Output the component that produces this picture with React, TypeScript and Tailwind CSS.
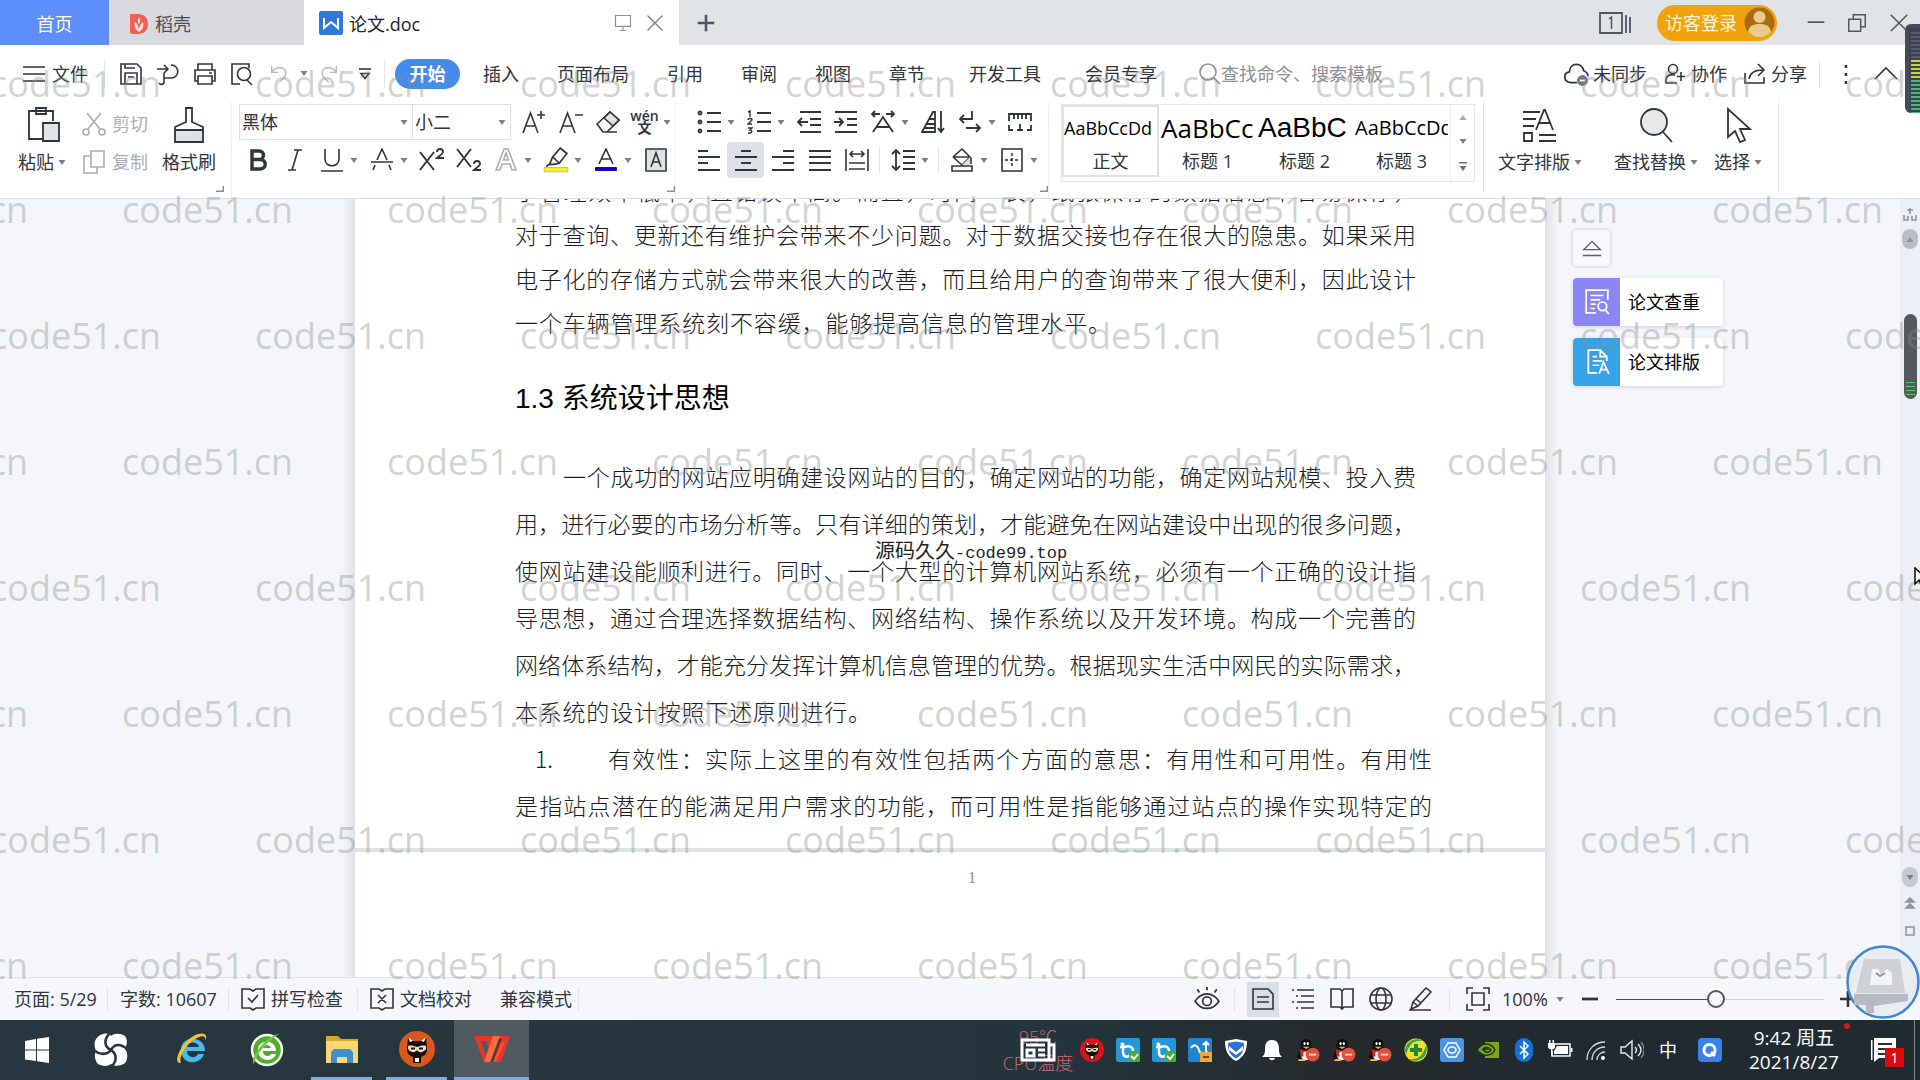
import type { ReactNode } from "react";

const SANS = "font-['Open_Sans','Noto_Sans_CJK_SC',sans-serif]";

interface IconProps {
  children: ReactNode;
  size?: number;
  box?: string;
  stroke?: number;
  className?: string;
}

const Icon = ({ children, size = 24, box = "0 0 24 24", stroke = 1.6, className }: IconProps) => (
  <svg
    width={size}
    height={size}
    viewBox={box}
    fill="none"
    stroke="currentColor"
    strokeWidth={stroke}
    className={`shrink-0 ${className ?? ""}`}
    aria-hidden="true"
  >
    {children}
  </svg>
);

const Caret = ({ className = "text-[#7b7f85]" }: { className?: string }) => (
  <svg width="8" height="5" viewBox="0 0 8 5" className={`shrink-0 ${className}`} aria-hidden="true">
    <path d="M0.5 0h7L4 5z" fill="currentColor" />
  </svg>
);

const Tool = ({ label, drop, active, children }: { label: string; drop?: boolean; active?: boolean; children: ReactNode }) => (
  <button type="button" aria-label={label} className="flex h-9 items-center shrink-0">
    <span className={`flex h-9 w-[37px] items-center justify-center ${active ? "bg-[#dde1e6] rounded-sm" : ""}`}>
      {children}
    </span>
    {drop && (
      <span className="flex w-[13px] justify-start">
        <Caret />
      </span>
    )}
  </button>
);

const Sep = ({ className = "h-8" }: { className?: string }) => (
  <span className={`w-px shrink-0 bg-[#e3e5e8] ${className}`} />
);

const Corner = ({ className = "" }: { className?: string }) => (
  <svg width="8" height="6" viewBox="0 0 8 6" className={`self-end shrink-0 ${className}`} aria-hidden="true">
    <path d="M0 5.3h7.3V0" fill="none" stroke="#8a8e94" strokeWidth="1.4" />
  </svg>
);

const TitleBar = () => (
  <header className="flex h-[45px] shrink-0 bg-[#e1e4e6] text-lg">
    <button type="button" className="w-[109px] shrink-0 bg-[#5d8efa] pt-0.5 text-white">
      首页
    </button>
    <button type="button" className="flex w-[195px] shrink-0 items-center gap-1.5 bg-[#d9dade] pl-5 pt-0.5 text-[#4a4e58]">
      <svg width="20" height="24" viewBox="0 0 20 24" aria-hidden="true">
        <path d="M1 2h8c6 0 10 4 10 10s-4 10-10 10H4c-2 0-3-1-3-3z" fill="#ef5f55" />
        <path d="M10 20c-4-2-5-7-4-10 3 2 4 6 4 10zM10 20c4-2 5-7 4-10-3 2-4 6-4 10zM10 12c-2-2-1-5 0-7 1 2 2 5 0 7z" fill="#fbe3df" />
      </svg>
      稻壳
    </button>
    <div className="flex w-[375px] shrink-0 items-center bg-white pl-[15px] pr-3.5 text-[#1d2026]">
      <svg width="24" height="24" viewBox="0 0 24 24" aria-hidden="true">
        <rect width="24" height="24" rx="2" fill="#2f78dc" />
        <path d="M5 7v10l7-6 7 6V7" fill="none" stroke="#fff" strokeWidth="2" />
      </svg>
      <span className="ml-1.5 grow pt-0.5">论文.doc</span>
      <Icon size={20} className="text-[#8d9198]" stroke={1.4}>
        <path d="M3 3h18v13H3zM12 16v5M8 21h8" />
      </Icon>
      <button type="button" aria-label="关闭标签" className="ml-3">
        <Icon size={20} className="text-[#7b7f85]">
          <path d="M3 3l18 18M21 3L3 21" />
        </Icon>
      </button>
    </div>
    <button type="button" aria-label="新建标签" className="ml-4">
      <Icon size={22} stroke={2.8} className="text-[#4b5563]">
        <path d="M12 3v18M3 12h18" />
      </Icon>
    </button>
    <div className="ml-auto flex items-center text-[#4f5563]">
      <Icon size={34} box="0 0 34 24" stroke={1.8}>
        <path d="M2 2h22v20H2zM28 4v18M32 6v16" />
        <path d="M11 8l2.500-2v12" strokeWidth="1.5" />
      </Icon>
      <Sep className="ml-3 h-7 bg-[#d5d7da]" />
      <button type="button" className="ml-3 flex h-9 w-[120px] items-center justify-between rounded-full bg-[#f1a30d] pl-2 pr-0.5 text-[#fff6df]">
        访客登录
        <svg width="31" height="31" viewBox="0 0 31 31" aria-hidden="true">
          <circle cx="15.500" cy="15.500" r="15" fill="#a96c12" />
          <circle cx="15.500" cy="10" r="6" fill="#ecca88" />
          <path d="M4 25c1-6 5-8 11.500-8S26 19 27 25c-6 7-17 7-23 0z" fill="#ecca88" />
        </svg>
      </button>
      <Sep className="ml-3 h-7 bg-[#d5d7da]" />
      <button type="button" aria-label="最小化" className="ml-4">
        <Icon size={20}>
          <path d="M2 11h20" strokeWidth="2" />
        </Icon>
      </button>
      <button type="button" aria-label="还原" className="ml-5">
        <Icon size={22}>
          <path d="M3 8h13v13H3zM8 8V3h13v13h-5" />
        </Icon>
      </button>
      <button type="button" aria-label="关闭" className="ml-5 mr-2.5">
        <Icon size={22}>
          <path d="M3 3l18 18M21 3L3 21" />
        </Icon>
      </button>
    </div>
  </header>
);

const MenuBar = () => (
  <nav className="flex h-[57px] shrink-0 items-center text-lg text-[#30343c]">
    <button type="button" className="ml-[22px] flex items-center gap-1.5">
      <Icon>
        <path d="M1 5h22M1 12h22M1 19h22" />
      </Icon>
      文件
    </button>
    <Sep className="ml-4 h-7" />
    <div className="ml-3.5 flex items-center gap-[13px]">
      <button type="button" aria-label="保存">
        <Icon>
          <path d="M2 2h16l4 4v16H2zM6 2v4h10M6 22V11h12v11M9 15h6" />
        </Icon>
      </button>
      <button type="button" aria-label="输出为PDF">
        <Icon>
          <path d="M1 7h11M8 3l4 4-4 4M15 3c9 0 9 13 0 13H8M8 11v9c0 3-4 3-5 1" />
        </Icon>
      </button>
      <button type="button" aria-label="打印">
        <Icon>
          <path d="M5 8V2h14v6M5 19H2V8h20v11h-3M5 14h14v8H5zM16 11h3" />
        </Icon>
      </button>
      <button type="button" aria-label="打印预览">
        <Icon>
          <path d="M10 22H2V2h17v4M17 18l5 5" />
          <circle cx="14" cy="12" r="6.500" />
        </Icon>
      </button>
    </div>
    <div className="ml-4 flex items-center gap-2.5 text-[#b5b9be]">
      <button type="button" aria-label="撤销">
        <Icon size={20}>
          <path d="M2 2v8h8M2 10c5-8 17-7 17 1 0 5-4 7-8 11" />
        </Icon>
      </button>
      <Caret />
      <button type="button" aria-label="恢复">
        <Icon size={20}>
          <path d="M22 2v8h-8M22 10C17 2 5 3 5 11c0 5 4 7 8 11" />
        </Icon>
      </button>
    </div>
    <button type="button" aria-label="自定义快速访问" className="ml-5">
      <Icon size={14} box="0 0 14 14">
        <path d="M1 2h12" />
        <path d="M3 6.500l4 5 4-5z" />
      </Icon>
    </button>
    <Sep className="ml-3 h-7" />
    <button type="button" className="ml-2.5 h-[30px] w-[65px] rounded-full bg-[#478bea] font-bold text-white">
      开始
    </button>
    <div className="ml-[23px] flex gap-[38px]">
      {["插入", "页面布局", "引用", "审阅", "视图", "章节"].map((m) => (
        <button type="button" key={m}>
          {m}
        </button>
      ))}
    </div>
    <div className="ml-11 flex gap-11">
      <button type="button">开发工具</button>
      <button type="button">会员专享</button>
    </div>
    <label className="ml-10 flex items-center text-[#8b909a]">
      <Icon>
        <circle cx="11" cy="10" r="8" />
        <path d="M17 16l6 6" />
      </Icon>
      <input type="text" aria-label="查找命令" placeholder="查找命令、搜索模板" className="w-[170px] bg-transparent outline-none placeholder:text-[#8b909a]" />
    </label>
    <div className="ml-auto flex items-center">
      <button type="button" className="flex items-center gap-1">
        <Icon size={26}>
          <path d="M13 20H7c-7-1-7-9-1-10C6 1 18 1 19 9c3 1 4 3 4 5" />
          <circle cx="18" cy="18" r="5" fill="#6d7793" stroke="none" />
          <path d="M15.500 18h5" stroke="#fff" />
        </Icon>
        未同步
      </button>
      <button type="button" className="ml-4 flex items-center gap-1">
        <Icon>
          <circle cx="10" cy="7" r="4.500" />
          <path d="M14 21H3v-3c0-5 5-6 9-5M18 10v9M14 14.500h8" />
        </Icon>
        协作
      </button>
      <button type="button" className="ml-4 flex items-center gap-1">
        <Icon>
          <path d="M2 11v10h19v-6M6 17C7 10 12 8 20 8M15 2l6 6-6 6" />
        </Icon>
        分享
      </button>
      <Sep className="ml-3 h-7" />
      <button type="button" aria-label="更多" className="ml-3.5">
        <Icon>
          <path d="M12 3v3M12 11v3M12 19v3" strokeWidth="2.5" />
        </Icon>
      </button>
      <button type="button" aria-label="收起功能区" className="ml-4 mr-[22px]">
        <Icon>
          <path d="M1 17L12 6l11 11" />
        </Icon>
      </button>
    </div>
  </nav>
);

const Lines = ({ rows }: { rows: number[][] }) => (
  <path d={rows.map(([x1, x2, y]) => `M${x1} ${y}H${x2}`).join("")} />
);

const FontGroup = () => (
  <div className="flex w-[436px] shrink-0 flex-col gap-0.5">
    <div className="flex items-center">
      <div className="mr-1 flex h-9 w-[272px] shrink-0 items-center border border-[#dcdfe3]">
        <select aria-label="字体" className="w-[160px] shrink-0 appearance-none bg-transparent pl-0.5 outline-none">
          <option>黑体</option>
        </select>
        <Caret />
        <Sep className="ml-1 h-full" />
        <select aria-label="字号" className="w-[85px] shrink-0 appearance-none bg-transparent pl-0.5 outline-none">
          <option>小二</option>
        </select>
        <Caret />
      </div>
      <Tool label="增大字号">
        <Icon>
          <path d="M1 23L8.500 3 16 23M4 16h9M19 1v8M15 5h8" />
        </Icon>
      </Tool>
      <Tool label="减小字号">
        <Icon>
          <path d="M1 23L8.500 3 16 23M4 16h9M16 5h8" />
        </Icon>
      </Tool>
      <Tool label="清除格式">
        <Icon>
          <path d="M1 14L14 2l9 8-12 12H7zM8 22h13" />
          <path d="M8 8l9 8 6-6-9-8z" fill="#e1e3e6" />
        </Icon>
      </Tool>
      <Tool label="拼音指南" drop>
        <span className="flex flex-col items-center text-sm font-semibold leading-[12px]">
          <span>wén</span>
          <span>文</span>
        </span>
      </Tool>
    </div>
    <div className="flex">
      <Tool label="加粗">
        <Icon stroke={3.4}>
          <path d="M6 3h7c6 0 6 8.500 0 8.500H6zM6 11.500h8c7 0 7 9.500 0 9.500H6z" />
        </Icon>
      </Tool>
      <Tool label="倾斜">
        <Icon>
          <path d="M11 2h8M5 22h8M15 2L9 22" />
        </Icon>
      </Tool>
      <Tool label="下划线" drop>
        <Icon>
          <path d="M5 1v10c0 9 14 9 14 0V1M1 23h22" />
        </Icon>
      </Tool>
      <Tool label="删除线" drop>
        <Icon>
          <path d="M7 12l5-11 5 11M1 14h22M5 17l-2 5M19 17l2 5" />
        </Icon>
      </Tool>
      <Tool label="上标">
        <Icon size={26} box="0 0 26 24" stroke={1.9}>
          <path d="M1 4l14 18M15 4L1 22" />
          <path d="M18 4c0-4 6-4 6 0 0 2-4 4-6 6h7" />
        </Icon>
      </Tool>
      <Tool label="下标">
        <Icon size={26} box="0 0 26 24" stroke={1.9}>
          <path d="M1 1l14 18M15 1L1 19" />
          <path d="M18 16c0-4 6-4 6 0 0 2-4 4-6 6h7" />
        </Icon>
      </Tool>
      <Tool label="文字效果" drop>
        <Icon className="text-[#a9adb2]">
          <path d="M2 22L10 1h4l8 21h-4l-2-6H8l-2 6zM9.500 12h5L12 5z" />
        </Icon>
      </Tool>
      <Tool label="突出显示" drop>
        <Icon size={26}>
          <path d="M9 9l7-8 6 5-7 9zM9 9l-3 7h4l5-1M6 16l-3 2" />
          <rect x="1" y="19" width="22" height="4" fill="#f5ee2b" stroke="#b5b02c" strokeWidth="0.6" />
        </Icon>
      </Tool>
      <Tool label="字体颜色" drop>
        <Icon>
          <path d="M5 16l7-15 7 15M7.500 11h9" />
          <rect x="1" y="19" width="22" height="4" rx="1" fill="#1505c4" stroke="none" />
        </Icon>
      </Tool>
      <Tool label="字符底纹">
        <Icon>
          <path d="M2 1h20v22H2z" fill="#e1e4e7" />
          <path d="M7 19l5-14 5 14M9 14h6" />
        </Icon>
      </Tool>
    </div>
  </div>
);

const ParagraphGroup = () => (
  <div className="flex w-[358px] shrink-0 flex-col gap-0.5">
    <div className="flex">
      <Tool label="项目符号" drop>
        <Icon stroke={1.8}>
          <circle cx="3" cy="3" r="1.500" />
          <circle cx="3" cy="12" r="1.500" />
          <circle cx="3" cy="21" r="1.500" />
          <Lines rows={[[10, 24, 3], [10, 24, 12], [10, 24, 21]]} />
        </Icon>
      </Tool>
      <Tool label="编号" drop>
        <Icon stroke={1.8}>
          <path d="M1 2l2-1v6M1 10c0-2 4-2 4 0L1 14h4M1 18h4l-2 2c3 0 2 4-2 3" strokeWidth="1.4" />
          <Lines rows={[[10, 24, 3], [10, 24, 12], [10, 24, 21]]} />
        </Icon>
      </Tool>
      <Tool label="减少缩进">
        <Icon stroke={1.8}>
          <Lines rows={[[3, 24, 2], [13, 24, 9], [13, 24, 15], [3, 24, 22]]} />
          <path d="M11 12H1M5 8l-4 4 4 4" />
        </Icon>
      </Tool>
      <Tool label="增加缩进">
        <Icon stroke={1.8}>
          <Lines rows={[[1, 23, 2], [13, 23, 9], [13, 23, 15], [1, 23, 22]]} />
          <path d="M0 12h9M5 8l4 4-4 4" />
        </Icon>
      </Tool>
      <Tool label="中文版式" drop>
        <Icon stroke={1.8}>
          <path d="M2 22L12 7l10 15M6 17h12M1 4h8M4 1L1 4l3 3M23 4h-8M20 1l3 3-3 3" />
        </Icon>
      </Tool>
      <Tool label="排序">
        <Icon stroke={1.8}>
          <path d="M1 22L12 2h2v20zM6 14h8M8 9h6M3 18h11M20 1v21M17 18l3 4 3-4" />
        </Icon>
      </Tool>
      <Tool label="换行" drop>
        <Icon stroke={1.8}>
          <path d="M14 1v8H2M6 5L2 9l4 4M8 18h14M18 14l4 4-4 4" />
        </Icon>
      </Tool>
      <Tool label="制表位">
        <Icon stroke={1.8}>
          <path d="M1 11V4h22v7M6 4v5M10 4v5M14 4v5M18 4v5M1 15v5h4M23 15v5h-4M12 14v6M9 20h6" />
        </Icon>
      </Tool>
    </div>
    <div className="flex items-center">
      <Tool label="左对齐">
        <Icon stroke={1.8}>
          <Lines rows={[[1, 11, 3], [1, 23, 9], [1, 11, 15], [1, 23, 22]]} />
        </Icon>
      </Tool>
      <Tool label="居中对齐" active>
        <Icon stroke={1.8}>
          <Lines rows={[[7, 17, 3], [1, 23, 9], [7, 17, 15], [1, 23, 22]]} />
        </Icon>
      </Tool>
      <Tool label="右对齐">
        <Icon stroke={1.8}>
          <Lines rows={[[12, 23, 3], [1, 23, 9], [12, 23, 15], [1, 23, 22]]} />
        </Icon>
      </Tool>
      <Tool label="两端对齐">
        <Icon stroke={1.8}>
          <Lines rows={[[1, 23, 3], [1, 23, 9], [1, 23, 15], [1, 23, 22]]} />
        </Icon>
      </Tool>
      <Tool label="分散对齐">
        <Icon stroke={1.6}>
          <path d="M1 1v22M23 1v22M4 15h16M4 21h16M5 6h14M8 3L5 6l3 3M16 3l3 3-3 3" />
        </Icon>
      </Tool>
      <Sep className="mx-1 h-7" />
      <Tool label="行距" drop>
        <Icon stroke={1.8}>
          <path d="M5 2v20M1 6l4-4 4 4M1 18l4 4 4-4" />
          <Lines rows={[[12, 24, 3], [12, 24, 9], [12, 24, 15], [12, 24, 21]]} />
        </Icon>
      </Tool>
      <Sep className="mx-1 h-7" />
      <Tool label="底纹颜色" drop>
        <Icon>
          <path d="M3 9l9-8 9 9v6M3 9l9 8 8-8M3 9h17M2 18h20v5H2z" />
          <path d="M12 17l8-8v8z" fill="#e4dfe2" stroke="none" />
        </Icon>
      </Tool>
      <Tool label="边框" drop>
        <Icon>
          <path d="M2 1h20v22H2z" />
          <path d="M12 5v14M5 12h14" strokeDasharray="3 2" />
        </Icon>
      </Tool>
    </div>
  </div>
);

const styles = [
  { sample: "AaBbCcDd", name: "正文", cls: "text-lg" },
  { sample: "AaBbCc", name: "标题 1", cls: "text-[26px]" },
  { sample: "AaBbC", name: "标题 2", cls: "text-[28px] font-['Liberation_Sans',sans-serif]" },
  { sample: "AaBbCcDd", name: "标题 3", cls: "text-xl" },
];

const BigTool = ({ label, children }: { label: string; children: ReactNode }) => (
  <button type="button" className="flex shrink-0 flex-col items-center gap-1">
    {children}
    <span className="flex items-center gap-1 leading-7">
      {label}
      <Caret />
    </span>
  </button>
);

const Ribbon = () => (
  <div className="flex h-24 shrink-0 text-lg text-[#30343c]">
    <div className="flex w-[232px] shrink-0 border-r border-[#eceef0] pb-1.5 pl-[18px] pt-1">
      <BigTool label="粘贴">
        <Icon size={38} box="0 0 38 38" stroke={1.8}>
          <path d="M30 15V5H6v28h15M13 2h10v6H13z" />
          <path d="M20 17h16v18H20z" fill="#e2e5e8" />
        </Icon>
      </BigTool>
      <div className="ml-4 flex flex-col text-[#a9adb3]">
        <button type="button" className="flex h-9 items-center gap-1.5">
          <Icon>
            <circle cx="4" cy="20" r="3" />
            <circle cx="20" cy="20" r="3" />
            <path d="M5 1l13 16M19 1L6 17" />
          </Icon>
          剪切
        </button>
        <button type="button" className="flex h-10 items-center gap-1.5">
          <Icon>
            <path d="M9 1h13v16H9zM9 6H2v17h13v-6" />
          </Icon>
          复制
        </button>
      </div>
      <button type="button" className="ml-3.5 flex shrink-0 flex-col items-center gap-1">
        <Icon size={38} box="0 0 38 38" stroke={1.8}>
          <path d="M5 24h28v12H5z" fill="#dfe2e6" stroke="none" />
          <path d="M16 2h6v14l11 5v15H5V21l11-5zM5 24h28" />
        </Icon>
        <span className="leading-7">格式刷</span>
      </button>
      <Corner />
    </div>
    <div className="flex shrink-0 border-r border-[#eceef0] pb-1.5 pl-[7px] pt-0.5">
      <FontGroup />
      <Corner className="-ml-2" />
    </div>
    <div className="flex shrink-0 border-r border-[#eceef0] pb-1.5 pl-3.5 pt-0.5">
      <ParagraphGroup />
      <Corner className="-ml-2" />
    </div>
    <div className="ml-3 mt-0.5 flex h-[78px] w-[414px] shrink-0 border border-[#e3e5e8]">
      {styles.map((s, i) => (
        <button
          type="button"
          key={s.name}
          className={`flex h-[72px] w-[97px] shrink-0 flex-col overflow-hidden border-2 ${i === 0 ? "border-[#dfe1e4]" : "border-transparent"}`}
        >
          <span className={`flex h-[42px] w-full items-center overflow-hidden whitespace-nowrap text-black ${s.cls}`}>{s.sample}</span>
          <span className="w-full text-center leading-6">{s.name}</span>
        </button>
      ))}
      <div className="flex grow flex-col items-center justify-between border-l border-[#eceef0] py-2.5">
        <Caret className="rotate-180 text-[#a5a8ad]" />
        <Caret />
        <svg width="8" height="9" viewBox="0 0 8 9" aria-hidden="true">
          <path d="M0 0h8v1.500H0zM0.500 4h7L4 9z" fill="#6d7177" />
        </svg>
      </div>
    </div>
    <Sep className="ml-2 h-[90px]" />
    <div className="ml-3.5 flex gap-8 pt-1">
      <BigTool label="文字排版">
        <Icon size={38} box="0 0 38 38" stroke={1.8}>
          <path d="M2 6h17M2 13h13M2 20h11M15 24l8-20h1l8 20M18 17h11M18 29h17M18 35h17M3 27h8v8H3z" />
        </Icon>
      </BigTool>
      <BigTool label="查找替换">
        <Icon size={38} box="0 0 38 38" stroke={1.8}>
          <circle cx="17" cy="16" r="13" fill="#e6e8ea" />
          <path d="M26 26l9 10" />
        </Icon>
      </BigTool>
      <div className="-ml-4">
        <BigTool label="选择">
          <Icon size={38} box="0 0 38 38" stroke={1.8}>
            <path d="M9 3v28l7-6 5 11 5-2-5-11h10z" />
          </Icon>
        </BigTool>
      </div>
    </div>
    <Sep className="ml-4 h-[90px]" />
  </div>
);

const intro = [
  "于管理效率低下，且错误率高。而且，时间一长，纸张保存的数据信息不容易保存，",
  "对于查询、更新还有维护会带来不少问题。对于数据交接也存在很大的隐患。如果采用",
  "电子化的存储方式就会带来很大的改善，而且给用户的查询带来了很大便利，因此设计",
];

const body = [
  "用，进行必要的市场分析等。只有详细的策划，才能避免在网站建设中出现的很多问题，",
  "使网站建设能顺利进行。同时、一个大型的计算机网站系统，必须有一个正确的设计指",
  "导思想，通过合理选择数据结构、网络结构、操作系统以及开发环境。构成一个完善的",
  "网络体系结构，才能充分发挥计算机信息管理的优势。根据现实生活中网民的实际需求，",
];

const JUSTIFY = "whitespace-nowrap [text-align-last:justify]";

const Page = () => (
  <article className="flex w-[1190px] shrink-0 flex-col shadow-[0_0_10px_4px_rgba(120,125,135,0.22)]">
    <section className="h-[653px] shrink-0 border-b-4 border-[#dfe1e4] bg-white font-['Noto_Sans_CJK_SC',sans-serif] text-[23px] font-light text-[#1c1c1c]">
      <div className="-mt-[31px] ml-[160px] w-[901px] leading-[44px]">
        {intro.map((t) => (
          <p key={t} className={JUSTIFY}>
            {t}
          </p>
        ))}
        <p className={`w-[596px] ${JUSTIFY}`}>一个车辆管理系统刻不容缓，能够提高信息的管理水平。</p>
      </div>
      <h2 className="ml-[160px] mt-[34px] font-['Liberation_Sans','Noto_Sans_CJK_SC',sans-serif] text-[28px] font-normal leading-[42px] text-black">
        1.3 系统设计思想
      </h2>
      <div className="ml-[160px] mt-[33px] w-[901px] leading-[47px]">
        <p className={`pl-12 ${JUSTIFY}`}>一个成功的网站应明确建设网站的目的，确定网站的功能，确定网站规模、投入费</p>
        {body.map((t) => (
          <p key={t} className={JUSTIFY}>
            {t}
          </p>
        ))}
        <p className={`w-[356px] ${JUSTIFY}`}>本系统的设计按照下述原则进行。</p>
      </div>
      <div className="ml-[160px] w-[917px] leading-[47px]">
        <p className="flex">
          <span className="w-[93px] pl-5">1.</span>
          <span className={`grow ${JUSTIFY}`}>有效性：实际上这里的有效性包括两个方面的意思：有用性和可用性。有用性</span>
        </p>
        <p className={JUSTIFY}>是指站点潜在的能满足用户需求的功能，而可用性是指能够通过站点的操作实现特定的</p>
      </div>
    </section>
    <section className="grow bg-white pl-11 pt-4 text-center font-['Liberation_Serif',serif] text-base leading-5 text-[#8b8b8b]">1</section>
  </article>
);

const SideTools = () => (
  <aside className="flex flex-1 flex-col items-start pl-7 pt-[31px] text-lg text-black">
    <button type="button" aria-label="收起" className="flex h-9 w-[37px] items-center justify-center rounded-sm bg-[#f8f9fb] text-[#5b5e63] shadow-[0_0_4px_rgba(0,0,0,0.2)]">
      <Icon size={20}>
        <path d="M2 14L12 4l10 10zM1 21h22" />
      </Icon>
    </button>
    <button type="button" className="mt-3 flex h-12 w-[150px] items-center rounded-sm bg-white shadow-[0_1px_4px_rgba(0,0,0,0.15)]">
      <span className="mr-2 flex h-12 w-[47px] items-center justify-center rounded-l-sm bg-[#8b86f6] text-white">
        <Icon size={26}>
          <path d="M11 22H2V1h20v9M6 6h12M6 10h9M6 14h5M6 18h4M20 20l3 3" />
          <circle cx="17" cy="16" r="4" />
        </Icon>
      </span>
      论文查重
    </button>
    <button type="button" className="mt-3 flex h-12 w-[150px] items-center rounded-sm bg-white shadow-[0_1px_4px_rgba(0,0,0,0.15)]">
      <span className="mr-2 flex h-12 w-[47px] items-center justify-center rounded-l-sm bg-[#35a3e6] text-white">
        <Icon size={26}>
          <path d="M12 22H4V1h11l6 6v4M15 1v6h6M8 7h4M8 11h9M8 15h6M14 23l4-11 5 11M15 19h6" />
        </Icon>
      </span>
      论文排版
    </button>
  </aside>
);

const ScrollRail = () => (
  <div className="flex w-5 shrink-0 flex-col items-center bg-[#eceff5] text-[#8f939b]">
    <Icon size={14} box="0 0 14 14" className="mt-2">
      <path d="M7 1v6M4 3h6M1 8v5h4V9M9 9v4h4V8" />
    </Icon>
    <span className="mt-2 flex h-5 w-4 items-center justify-center rounded-lg bg-[#b9bdc6]">
      <Caret className="rotate-180" />
    </span>
    <span className="mt-[65px] flex h-[85px] w-[13px] flex-col justify-end gap-[3px] rounded-full bg-[#55585c] px-0.5 pb-1">
      {[0, 1, 2, 3].map((n) => (
        <span key={n} className="h-px bg-[#4fd06f]" />
      ))}
    </span>
    <span className="mt-auto flex h-5 w-4 items-center justify-center rounded-lg bg-[#c4c8d0]">
      <Caret />
    </span>
    <Icon size={12} box="0 0 12 12" className="mt-2.5">
      <path d="M2 5l4-4 4 4zM2 11l4-4 4 4z" fill="currentColor" />
    </Icon>
    <Icon size={12} box="0 0 12 12" className="mb-10 mt-4">
      <path d="M2 2h8v8H2z" />
    </Icon>
  </div>
);

const StatusBar = () => (
  <footer className="flex h-[43px] shrink-0 items-center border-t border-[#dfe2e6] bg-[#f5f7fa] text-lg text-[#30343c]">
    <span className="ml-3.5 w-[93px]">页面: 5/29</span>
    <Sep className="h-6" />
    <span className="ml-3 w-[108px]">字数: 10607</span>
    <Sep className="h-6" />
    <button type="button" className="ml-3 flex items-center gap-1.5">
      <Icon>
        <path d="M1 2h8l3 2 3-2h8v19h-8l-3 2-3-2H1zM7 11l4 4 6-7" />
      </Icon>
      拼写检查
    </button>
    <Sep className="ml-3.5 h-6" />
    <button type="button" className="ml-3 flex items-center gap-1.5">
      <Icon>
        <path d="M1 2h8l3 2 3-2h8v19h-8l-3 2-3-2H1zM8 8l8 8M16 8l-8 8" />
      </Icon>
      文档校对
    </button>
    <button type="button" className="ml-7">
      兼容模式
    </button>
    <Sep className="ml-1.5 h-6" />
    <div className="ml-auto flex items-center">
      <button type="button" aria-label="护眼模式">
        <Icon size={26}>
          <path d="M1 14c6-9 16-9 22 0-6 9-16 9-22 0zM12 1v3M3 3l2 3M21 3l-2 3" />
          <circle cx="12" cy="14" r="4" />
        </Icon>
      </button>
      <Sep className="ml-3.5 mr-3 h-6" />
      <button type="button" aria-label="页面视图" className="mr-1 flex h-[35px] w-8 items-center justify-center bg-[#dbdfe5]">
        <Icon>
          <path d="M2 2h15l5 5v15H2zM6 10h12M6 15h12" />
        </Icon>
      </button>
      <button type="button" aria-label="大纲视图" className="flex w-[39px] justify-center">
        <Icon>
          <path d="M1 3h2M6 3h17M5 9h2M10 9h13M1 15h2M6 15h17M5 21h2M10 21h13" />
        </Icon>
      </button>
      <button type="button" aria-label="阅读版式" className="flex w-[39px] justify-center">
        <Icon>
          <path d="M1 2h9l2 2 2-2h9v18h-9l-2 2-2-2H1zM12 4v18" />
        </Icon>
      </button>
      <button type="button" aria-label="Web版式" className="flex w-[39px] justify-center">
        <Icon>
          <circle cx="12" cy="12" r="11" />
          <ellipse cx="12" cy="12" rx="5" ry="11" />
          <path d="M2 8h20M2 16h20" />
        </Icon>
      </button>
      <button type="button" aria-label="写作模式" className="flex w-[39px] justify-center">
        <Icon>
          <path d="M5 15L18 1l5 4-13 14-7 3zM5 15l5 4M8 12l5 4M1 23h22" />
        </Icon>
      </button>
      <Sep className="ml-2.5 mr-4 h-6" />
      <button type="button" aria-label="适应窗口">
        <Icon>
          <path d="M1 7V1h6M17 1h6v6M23 17v6h-6M7 23H1v-6M6 6h12v12H6z" />
        </Icon>
      </button>
      <button type="button" className="ml-3 flex w-[62px] items-center justify-between">
        100%
        <Caret />
      </button>
      <button type="button" aria-label="缩小" className="ml-[18px]">
        <Icon size={16} box="0 0 16 16" stroke={2.8}>
          <path d="M0 8h16" />
        </Icon>
      </button>
      <input
        type="range"
        aria-label="显示比例"
        defaultValue={48}
        className="ml-[18px] h-5 w-[208px] appearance-none bg-[linear-gradient(to_right,#4a4d52_48%,#cfd2d6_48%)] bg-[length:100%_1px] bg-center bg-no-repeat [&::-webkit-slider-thumb]:size-[18px] [&::-webkit-slider-thumb]:appearance-none [&::-webkit-slider-thumb]:rounded-full [&::-webkit-slider-thumb]:border-2 [&::-webkit-slider-thumb]:border-[#55585d] [&::-webkit-slider-thumb]:bg-[#f5f7fa]"
      />
      <button type="button" aria-label="放大" className="ml-4 mr-16">
        <Icon size={16} box="0 0 16 16" stroke={2.6}>
          <path d="M0 8h16M8 0v16" />
        </Icon>
      </button>
    </div>
  </footer>
);

const Art = ({ size, box, children }: { size: number; box: string; children: ReactNode }) => (
  <svg width={size} height={size} viewBox={box} aria-hidden="true">
    {children}
  </svg>
);

const Ninja = ({ size, color }: { size: number; color: string }) => (
  <Art size={size} box="0 0 36 36">
    <circle cx="18" cy="18" r="18" fill={color} />
    <path d="M9 6l5 4h8l5-4 1 12c0 5-3 7-6 8v6h-8v-6c-3-1-6-3-6-8z" fill="#15110f" />
    <path d="M9 15c3-1 6 0 9 1 3-1 6-2 9-1v3c-3 4-7 4-9 1-2 3-6 3-9-1z" fill="#f6dcc0" />
    <path d="M12 16.500h4v2h-4zM20 16.500h4v2h-4z" fill="#15110f" />
    <path d="M9 6l2 5 3-1zM27 6l-2 5-3-1zM16 27h4v4h-4z" fill="#fff" />
  </Art>
);

const Penguin = () => (
  <Art size={24} box="0 0 26 26">
    <path d="M5 12C4 4 7 1 11 1s7 3 6 11l4 7-4 5H5l-4-4z" fill="#0d0f12" />
    <ellipse cx="11" cy="19" rx="5.500" ry="5" fill="#f7f3f0" />
    <ellipse cx="9.300" cy="6" rx="1.200" ry="1.800" fill="#fff" />
    <ellipse cx="12.800" cy="6" rx="1.200" ry="1.800" fill="#fff" />
    <path d="M7 9.500h8l-4 2.500zM2 25c1-3 6-3 8-1v1z" fill="#e9b548" />
    <path d="M4 12c4 2 9 2 13 0v3H8v5H5z" fill="#c9282c" />
    <circle cx="18" cy="18" r="7.500" fill="#e0503f" />
    <path d="M14 17h8v2h-8z" fill="#ffd3cc" />
  </Art>
);

const Sync = () => (
  <Art size={24} box="0 0 24 24">
    <rect width="24" height="24" rx="2" fill="#2597d6" />
    <path d="M7 5v9c0 5 4 6 7 3M4 9h5c4-2 8 0 8 4M7 5L5 7" fill="none" stroke="#fff" strokeWidth="2.5" />
    <rect x="13" y="13" width="11" height="11" rx="1" fill="#3fae3c" />
    <path d="M15 18l3 3 4-5" fill="none" stroke="#fff" strokeWidth="1.8" />
  </Art>
);

const pinned: { name: string; bg?: string; open?: boolean; art: ReactNode }[] = [
  {
    name: "Internet Explorer",
    art: (
      <Art size={36} box="0 0 36 36">
        <path d="M31 20H13c0 7 9 8 11 3h6c-4 12-23 11-23-4C7 4 31 4 31 20zM25 16c-1-6-11-6-12 0z" fill="#4bb8ee" />
        <path d="M7 32C-3 34 8 8 24 3c7-2 10 1 7 7 1-4-1-6-6-4C12 11 4 27 7 32z" fill="#f2c230" />
      </Art>
    ),
  },
  {
    name: "360浏览器",
    art: (
      <Art size={36} box="0 0 36 36">
        <circle cx="18" cy="19" r="15" fill="#52ab2e" stroke="#f3fbef" strokeWidth="2.5" />
        <path d="M27 20H14c0 6 7 6 8 3h5c-3 9-18 8-18-4 0-11 18-11 18 1zM22 17c-1-4-7-4-8 0z" fill="#fff" />
        <path d="M5 33C0 30 12 8 31 2 18 11 6 24 5 33z" fill="#72c83f" />
      </Art>
    ),
  },
  {
    name: "文件资源管理器",
    open: true,
    art: (
      <Art size={34} box="0 0 34 34">
        <path d="M1 4h12l3 3h17v23H1z" fill="#d9a62e" />
        <path d="M1 9h32v22H1z" fill="#f8d775" />
        <path d="M6 31V20l3-3h16l3 3v11h-6v-6H12v6z" fill="#3d8fd0" />
      </Art>
    ),
  },
  { name: "录屏", open: true, art: <Ninja size={36} color="#d9581c" /> },
  {
    name: "WPS Office",
    open: true,
    bg: "bg-[#4f5b61]",
    art: (
      <Art size={38} box="0 0 38 38">
        <path d="M1 6h26L16 32h-5z" fill="#e8352b" />
        <path d="M8 11h5l3 8-3 7z" fill="#4f5b61" />
        <path d="M27 6h10L28 32h-7z" fill="#e8352b" />
        <path d="M20 6h7L17 32h-6z" fill="#ff6f3d" />
        <path d="M28 12h4l-9 20h-3z" fill="#f2522f" />
        <path d="M26 9h3l-9 23h-2z" fill="#6a3030" />
      </Art>
    ),
  },
];

const tray: { name: string; art: ReactNode }[] = [
  { name: "录屏助手", art: <Ninja size={24} color="#dc1418" /> },
  { name: "同步一", art: <Sync /> },
  { name: "同步二", art: <Sync /> },
  {
    name: "同步三",
    art: (
      <Art size={24} box="0 0 24 24">
        <rect width="24" height="24" rx="2" fill="#1f86cf" />
        <path d="M3 10c3-5 7-2 8 2s5 5 8 1M18 13V4M15 7l3-3 3 3" fill="none" stroke="#fff" strokeWidth="2" />
        <rect x="12" y="14" width="12" height="10" fill="#f2a53a" />
        <path d="M15 19h6" stroke="#7c4a08" strokeWidth="2" />
      </Art>
    ),
  },
  {
    name: "安全卫士",
    art: (
      <Art size={24} box="0 0 24 24">
        <path d="M12 1l11 2c0 10-3 16-11 20C4 19 1 13 1 3z" fill="#fff" />
        <path d="M12 3.500l8 1.500c0 8-2 12-8 15.500C6 17 4 13 4 5z" fill="#2a72d8" />
        <path d="M5 8l7 6 7-6v4l-7 5-7-5z" fill="#fff" />
      </Art>
    ),
  },
  {
    name: "通知",
    art: (
      <Art size={24} box="0 0 24 24">
        <path d="M12 2c6 0 7 5 7 9 0 5 1 6 3 8H2c2-2 3-3 3-8 0-4 1-9 7-9zM9 20h6c-1 3-5 3-6 0z" fill="#fff" />
      </Art>
    ),
  },
  { name: "QQ一", art: <Penguin /> },
  { name: "QQ二", art: <Penguin /> },
  { name: "QQ三", art: <Penguin /> },
  {
    name: "安全防护",
    art: (
      <Art size={24} box="0 0 24 24">
        <circle cx="12" cy="12" r="11.500" fill="#f6dd2c" />
        <path d="M2 17C-2 7 9-3 19 3c-9-1-14 3-17 14zM22 7c4 10-7 20-17 14 9 1 14-3 17-14z" fill="#2fa84a" />
        <path d="M12 6v12M6 12h12" stroke="#1f8a38" strokeWidth="4" />
      </Art>
    ),
  },
  {
    name: "控制台",
    art: (
      <Art size={24} box="0 0 24 24">
        <rect width="24" height="24" rx="3" fill="#4a95e6" />
        <path d="M8 5h8l4 7-4 7H8l-4-7z" fill="none" stroke="#fff" strokeWidth="1.5" />
        <ellipse cx="12" cy="12" rx="4" ry="3" fill="none" stroke="#fff" strokeWidth="1.5" />
      </Art>
    ),
  },
  {
    name: "NVIDIA",
    art: (
      <Art size={24} box="0 0 24 24">
        <path d="M9 4h14v16H9z" fill="#78a91c" />
        <path d="M1 12c5-8 14-8 18 0-4 7-12 7-18 0z" fill="#78a91c" stroke="#26321a" strokeWidth="1.5" />
        <path d="M6 12c3-4 7-3 9 0-2 3-6 3-7 0 2-2 4-1 4 0" fill="none" stroke="#26321a" strokeWidth="1.5" />
      </Art>
    ),
  },
  {
    name: "蓝牙",
    art: (
      <Art size={24} box="0 0 24 24">
        <rect x="3" width="18" height="24" rx="9" fill="#1673d6" />
        <path d="M8 8l8 8-4 4V4l4 4-8 8" fill="none" stroke="#fff" strokeWidth="1.5" />
      </Art>
    ),
  },
  {
    name: "电池",
    art: (
      <Art size={26} box="0 0 26 24">
        <path d="M7 6h16v12H5v-5" fill="none" stroke="#fff" strokeWidth="1.5" />
        <path d="M10 8h11v8H7v-3zM24 10h1.500v4H24zM1 5h7v4c0 3-7 3-7 0zM2 2h1.500v3H2zM5.500 2H7v3H5.500zM4 10h1.500v8H4z" fill="#fff" />
      </Art>
    ),
  },
  {
    name: "无线网络",
    art: (
      <Art size={24} box="0 0 24 24">
        <path d="M3 22C3 11 11 4 21 4M8 22c0-8 6-13 13-13M13 22c0-5 4-8 8-8" fill="none" stroke="#d5dadd" strokeWidth="1.3" />
        <circle cx="19" cy="20" r="2" fill="#fff" />
      </Art>
    ),
  },
  {
    name: "音量",
    art: (
      <Art size={24} box="0 0 24 24">
        <path d="M1 9h4l7-6v18l-7-6H1zM15 9c2 2 2 4 0 6M18 6c4 4 4 8 0 12" fill="none" stroke="#e8ecee" strokeWidth="1.4" />
        <path d="M21 4c4 5 4 11 0 16" fill="none" stroke="#8e979c" strokeWidth="1.2" />
      </Art>
    ),
  },
  { name: "输入法", art: <span className="text-lg text-white">中</span> },
];

const Taskbar = () => (
  <div className="flex h-[60px] shrink-0 bg-[linear-gradient(to_right,#28373f,#24343d_55%,#25292c_70%,#1f2b31_82%)] text-white">
    <button type="button" aria-label="开始菜单" className="flex w-[73px] shrink-0 items-center justify-center">
      <Art size={26} box="0 0 26 26">
        <path d="M1 4l11-2v10.500H1zM13 1.800L25 0v12.500H13zM1 13.500h11V24L1 22.500zM13 13.500h12V26l-12-1.800z" fill="#fff" />
      </Art>
    </button>
    <button type="button" aria-label="搜索" className="flex w-[75px] shrink-0 items-center justify-center">
      <Art size={34} box="0 0 34 34">
        <path d="M9 1c4-1 7 0 8 2 3-3 10-3 14 0 3 4 2 9 0 13 3 4 3 10 0 14-4 3-10 4-14 1-4 3-9 2-13 0-3-3-4-9-2-13-2-5-2-9 0-12 2-3 4-4 7-5z" fill="#fff" />
        <path d="M17 17c-6-3-8-9-2-16M17 17c3-6 9-7 16-1M17 17c6 4 6 11 1 16M17 17c-4 5-11 5-16 1" fill="none" stroke="#27363e" strokeWidth="2.6" />
      </Art>
    </button>
    <div className="ml-1.5 flex">
      {pinned.map((app) => (
        <button type="button" key={app.name} aria-label={app.name} className={`flex w-[75px] shrink-0 flex-col items-center ${app.bg ?? ""}`}>
          <span className="flex grow items-center">{app.art}</span>
          <span className={`h-[3px] ${app.bg ? "w-full" : "w-[61px]"} ${app.open ? "bg-[#79afe2]" : ""}`} />
        </button>
      ))}
    </div>
    <div className="ml-auto flex items-center">
      <div className="relative flex w-[72px] flex-col items-center text-lg font-light leading-[26px] text-[#c96a74]">
        <span>95℃</span>
        <span>CPU温度</span>
        <svg width="36" height="24" viewBox="0 0 36 24" className="absolute left-[18px] top-3.5" fill="none" stroke="#fff" strokeWidth="3" aria-hidden="true">
          <path d="M2 2h27v20H2zM29 7h5v15h-7M6 7h19M7 12h7v6H7zM18 12h7M18 17h7" />
        </svg>
      </div>
      {tray.map((t) => (
        <button type="button" key={t.name} aria-label={t.name} className="flex w-9 justify-center">
          {t.art}
        </button>
      ))}
      <button type="button" aria-label="Q" className="flex w-12 justify-center">
        <Art size={24} box="0 0 24 24">
          <rect width="24" height="24" rx="4" fill="#3b82e6" />
          <circle cx="11.500" cy="12" r="5.500" fill="none" stroke="#fff" strokeWidth="3" />
          <path d="M13 14l4 4" stroke="#fff" strokeWidth="2.5" />
        </Art>
      </button>
      <div className="w-[120px] text-center text-[19px] leading-6">
        <div>9:42 周五</div>
        <div>2021/8/27</div>
      </div>
      <button type="button" aria-label="操作中心" className="relative flex w-[60px] justify-center">
        <Art size={28} box="0 0 28 28">
          <path d="M4 2h22v20H9l-5 4zM1 4h1.500v20H1z" fill="#fff" />
          <path d="M8 8h14M8 13h14M8 18h8" stroke="#26323a" strokeWidth="2" />
        </Art>
        <span className="absolute left-[31px] top-3 h-[19px] w-[19px] bg-[#d90d0d] text-sm leading-[19px]">1</span>
      </button>
      <span className="mr-[5px] h-[60px] w-px bg-[#7d868a]" />
    </div>
  </div>
);

const Watermark = () => (
  <div className="pointer-events-none absolute inset-x-0 top-0 h-[1020px] overflow-hidden pt-[21px]" aria-hidden="true">
    {Array.from({ length: 8 }, (_, row) => (
      <div key={row} className={`flex h-[126px] ${row % 2 ? "-ml-[143px]" : "-ml-[10px]"}`}>
        {Array.from({ length: 8 }, (_, col) => (
          <span key={col} className="w-[265px] shrink-0 pt-9 text-4xl leading-[54px] text-[#8c8c8c]/40">
            code51.cn
          </span>
        ))}
      </div>
    ))}
  </div>
);

const App = () => {
  return (
    <div className={`relative flex h-screen flex-col overflow-hidden bg-white ${SANS}`}>
      <TitleBar />
      <MenuBar />
      <Ribbon />
      <main className="flex min-h-0 grow overflow-hidden border-t border-[#dcdfe2] bg-[#f4f6f9]">
        <div className="flex-1 pl-7" />
        <Page />
        <SideTools />
        <ScrollRail />
      </main>
      <StatusBar />
      <Taskbar />

      <Watermark />
      <p className="absolute left-[875px] top-[539px] whitespace-nowrap font-['Liberation_Mono','Noto_Sans_CJK_SC',monospace] leading-7 text-[#222]">
        <span className="text-xl">源码久久</span>
        <span className="text-[17px]">-code99.top</span>
      </p>

      {/* desktop level meter docked on the right edge */}
      <div className="absolute right-0 top-6 flex h-[89px] w-[15px] flex-col gap-0.5 overflow-hidden rounded-l-md border-l-4 border-t-4 border-[#474a58] bg-[#3d4150] pl-0.5 pt-1">
        {Array.from({ length: 21 }, (_, n) => (
          <span key={n} className={`h-0.5 shrink-0 ${n < 7 ? "bg-[#565b78]" : n < 12 ? "bg-[#c8cf4c]" : "bg-[#46b47c]"}`} />
        ))}
      </div>
      <svg width="74" height="74" viewBox="0 0 74 74" className="absolute right-0 top-[945px]" aria-hidden="true">
        <circle cx="37" cy="37" r="35.500" fill="#e9edf2" stroke="#3f86d8" strokeWidth="2.5" />
        <path d="M18 14h36l5 34H10z" fill="#cfd2d5" />
        <path d="M26 24h6l3 5 6-5 5 4v12H24z" fill="#f3f4f5" />
        <path d="M8 49h54v7l-34 5v7h-8v-8H8z" fill="#b7bac4" />
        <path d="M30 28l4 3 5-3" fill="none" stroke="#8f949b" strokeWidth="2" />
      </svg>
      <svg width="14" height="22" viewBox="0 0 14 22" className="absolute -right-2 top-[567px]" aria-hidden="true">
        <path d="M1 1v16l4-4 3 7 3-1-3-7h5z" fill="#fff" stroke="#111" strokeWidth="1.5" />
      </svg>
      <span className="absolute right-[70px] top-[1023px] size-1.5 rounded-full bg-[#d11a1a]" />
    </div>
  );
};

export default App;
